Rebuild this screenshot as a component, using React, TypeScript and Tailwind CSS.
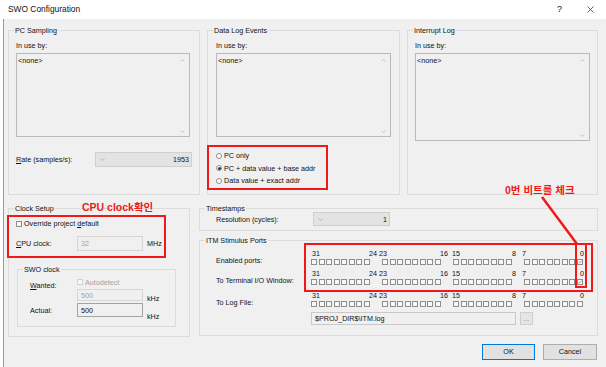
import React from "react";

type Props = { children?: React.ReactNode; className?: string };

// group box drawn the way the Win32 dialog does it: title sits on the top border
function Group({ title, className = "", children }: Props & { title: string }) {
  return (
    <fieldset className={`border border-[#dcdcdc] min-w-0 ${className}`}>
      <legend className="ml-[5px] px-[1px] leading-[9px]">{title}</legend>
      {children}
    </fieldset>
  );
}

function Chevron({ up = false, color = "#b8b8b8" }: { up?: boolean; color?: string }) {
  return (
    <svg width="5" height="3" viewBox="0 0 5 3" className="block">
      <polyline
        points={up ? "0.5,2.5 2.5,0.5 4.5,2.5" : "0.5,0.5 2.5,2.5 4.5,0.5"}
        fill="none"
        stroke={color}
        strokeWidth="0.8"
      />
    </svg>
  );
}

function ListBox({ className = "" }: Props) {
  return (
    <div className={`flex border border-[#b9b9b9] bg-[#f0f0f0] ${className}`}>
      <div className="flex-1 pl-[1px] pt-[2px] leading-[9px]">&lt;none&gt;</div>
      <div className="w-[13px] flex flex-col items-center justify-between pt-[5px] pb-[3px]">
        <Chevron up />
        <Chevron />
      </div>
    </div>
  );
}

function Combo({ value, className = "" }: { value: string; className?: string }) {
  return (
    <div className={`flex items-center justify-between border border-[#cfcfcf] bg-[#e3e3e3] pl-[4px] pr-[2px] ${className}`}>
      <Chevron color="#a8a8a8" />
      <span className="leading-[9px]">{value}</span>
    </div>
  );
}

function Box({ checked = false, disabled = false }: { checked?: boolean; disabled?: boolean }) {
  return (
    <span
      className={`flex items-center justify-center w-[6px] h-[6px] border ${
        disabled ? "border-[#d2d2d2]" : "border-[#8e8e8e]"
      } bg-[#f7f7f7]`}
    >
      {checked && (
        <svg width="4" height="4" viewBox="0 0 4 4" className="block">
          <polyline points="0.4,2 1.5,3.2 3.6,0.6" fill="none" stroke="#8a8a8a" strokeWidth="0.7" />
        </svg>
      )}
    </span>
  );
}

function Radio({ label, checked = false }: { label: string; checked?: boolean }) {
  return (
    <div className="flex items-center h-[9px] leading-[9px]">
      <span className="flex items-center justify-center w-[6px] h-[6px] rounded-full border border-[#8e8e8e] bg-white">
        {checked && <span className="w-[3px] h-[3px] rounded-full bg-[#333]" />}
      </span>
      <span className="ml-[2px]">{label}</span>
    </div>
  );
}

function Field({ value, className = "", dim = false }: { value: string; className?: string; dim?: boolean }) {
  return (
    <div
      className={`flex items-center pl-[3px] border bg-[#f0f0f0] leading-[9px] ${
        dim ? "border-[#d6d6d6] text-[#a3a3a3]" : "border-[#a4a4a4]"
      } ${className}`}
    >
      {value}
    </div>
  );
}

// bit numbers above the check boxes, with the widths that put each one where the dialog has it
const LABELS: [string, string][] = [
  ["31", "w-[57px]"],
  ["24", "w-[10px]"],
  ["23", "w-[61px]"],
  ["16", "w-[12px]"],
  ["15", "w-[60px]"],
  ["8", "w-[10px]"],
  ["7", "w-[58px]"],
  ["0", "w-[6px]"],
];

function BitRow({ checkedZero = false }: { checkedZero?: boolean }) {
  return (
    <div className="flex flex-col">
      <div className="flex h-[7px] leading-[7px] pl-[1px]">
        {LABELS.map(([n, w]) => (
          <span key={n} className={w}>
            {n}
          </span>
        ))}
      </div>
      <div className="flex gap-[12px] mt-[2px]">
        {[0, 1, 2, 3].map((g) => (
          <div key={g} className="w-[59px] flex justify-between">
            {Array.from({ length: 8 }).map((_, i) => (
              <Box key={i} checked={checkedZero && g === 3 && i === 7} />
            ))}
          </div>
        ))}
      </div>
    </div>
  );
}

function Button({ label, focused = false }: { label: string; focused?: boolean }) {
  return (
    <div
      className={`flex items-center justify-center h-[16px] bg-[#e1e1e1] border ${
        focused ? "w-[53px] border-[#0078d7]" : "w-[54px] border-[#adadad]"
      }`}
    >
      {label}
    </div>
  );
}

export default function App() {
  return (
    <div className="relative w-[606px] h-[367px] overflow-hidden bg-white text-[#111] text-[7.2px] font-['Liberation_Sans',Arial,sans-serif]">
      {/* title bar */}
      <div className="flex items-center h-[19px] pl-[8px] text-[8.4px]">
        <span className="flex-1">SWO Configuration</span>
        <span className="w-[30px] text-[9px]">?</span>
        <svg width="7" height="7" viewBox="0 0 7 7" className="mr-[12px] block">
          <path d="M0.5 0.5 L6.5 6.5 M6.5 0.5 L0.5 6.5" stroke="#222" strokeWidth="0.7" />
        </svg>
      </div>

      <div className="ml-[3px] h-[348px] border-l border-[#9b9b9b] bg-[#f0f0f0] pl-[4px] pt-[7px]">
        {/* top row */}
        <div className="flex gap-[7px]">
          <Group title="PC Sampling" className="w-[192px] h-[169px]">
            <div className="pl-[7px]">
              <div className="pt-[6px] leading-[9px]">In use by:</div>
              <ListBox className="mt-[3px] w-[174px] h-[84px]" />
              <div className="mt-[15px] flex items-center">
                <span className="w-[79px] leading-[9px]">
                  <u>R</u>ate (samples/s):
                </span>
                <Combo value="1953" className="w-[97px] h-[15px]" />
              </div>
            </div>
          </Group>

          <Group title="Data Log Events" className="w-[193px] h-[169px]">
            <div className="pl-[8px]">
              <div className="pt-[6px] leading-[9px]">In use by:</div>
              <ListBox className="mt-[3px] w-[175px] h-[84px]" />
              <div className="mt-[14px] flex flex-col gap-[3.5px]">
                <Radio label="PC only" />
                <Radio label="PC + data value + base addr" checked />
                <Radio label="Data value + exact addr" />
              </div>
            </div>
          </Group>

          <Group title="Interrupt Log" className="w-[191px] h-[169px]">
            <div className="pl-[7px]">
              <div className="pt-[6px] leading-[9px]">In use by:</div>
              <ListBox className="mt-[3px] w-[175px] h-[88px]" />
            </div>
          </Group>
        </div>

        {/* bottom row */}
        <div className="mt-[9px] flex gap-[9px]">
          <Group title="Clock Setup" className="w-[182px] h-[133px]">
            <div className="pl-[7px]">
              <div className="pt-[6px] flex items-center h-[15px] leading-[9px]">
                <Box />
                <span className="ml-[2px]">
                  Override project <u>d</u>efault
                </span>
              </div>
              <div className="mt-[8px] flex items-center">
                <span className="w-[61px] leading-[9px]">
                  <u>C</u>PU clock:
                </span>
                <Field value="32" dim className="w-[66px] h-[15px]" />
                <span className="ml-[4px] leading-[9px]">MHz</span>
              </div>

              <Group title="SWO clock" className="mt-[14px] ml-[1px] w-[159px] h-[62px]">
                <div className="flex pl-[12px]">
                  <div className="w-[47px] flex flex-col leading-[9px]">
                    <span className="mt-[6.5px]">
                      <u>W</u>anted:
                    </span>
                    <span className="mt-[16px]">Actual:</span>
                  </div>
                  <div className="w-[66px] flex flex-col">
                    <div className="mt-[4px] h-[8px] flex items-center leading-[9px] text-[#a3a3a3]">
                      <Box disabled />
                      <span className="ml-[2px]">Autodetect</span>
                    </div>
                    <Field value="500" dim className="mt-[3px] h-[12px]" />
                    <Field value="500" className="mt-[2px] h-[14px]" />
                  </div>
                  <div className="ml-[4px] flex flex-col leading-[9px]">
                    <span className="mt-[19.5px]">kHz</span>
                    <span className="mt-[9px]">kHz</span>
                  </div>
                </div>
              </Group>
            </div>
          </Group>

          <div className="w-[399px] flex flex-col">
            <Group title="Timestamps" className="h-[27px]">
              <div className="flex items-center pl-[16px] -mt-[1px]">
                <span className="w-[97px] leading-[9px]">Resolution (cycles):</span>
                <Combo value="1" className="w-[77px] h-[14px]" />
              </div>
            </Group>

            <Group title="ITM Stimulus Ports" className="mt-[5px] h-[100px]">
              <div className="pl-[16px] pt-[5px]">
                <div className="flex items-end">
                  <span className="w-[95px] leading-[9px]">Enabled ports:</span>
                  <BitRow checkedZero />
                </div>
                <div className="mt-[5px] flex items-end">
                  <span className="w-[95px] leading-[9px]">To Terminal I/O Window:</span>
                  <BitRow checkedZero />
                </div>
                <div className="mt-[7px] flex items-end">
                  <span className="w-[95px] leading-[9px]">To Log File:</span>
                  <BitRow />
                </div>
                <div className="mt-[5px] ml-[95px] flex items-center">
                  <Field value="$PROJ_DIR$\ITM.log" className="w-[205px] h-[13px] border-[#c9c9c9]" />
                  <div className="ml-[4px] w-[13px] h-[13px] flex items-center justify-center border border-[#cfcfcf] bg-[#e5e5e5] text-[#8a8a8a] leading-[9px]">
                    ...
                  </div>
                </div>
              </div>
            </Group>
          </div>
        </div>

        {/* dialog buttons */}
        <div className="mt-[7px] pr-[9px] flex justify-end gap-[8px]">
          <Button label="OK" focused />
          <Button label="Cancel" />
        </div>
      </div>

      {/* red annotations drawn over the screenshot */}
      <div className="absolute inset-0 pointer-events-none font-['Liberation_Sans','Noto_Sans_CJK_KR',sans-serif]">
        <div className="absolute left-[207px] top-[145px] w-[121px] h-[45px] border-2 border-[#f01818]" />
        <div className="absolute left-[7px] top-[215px] w-[159px] h-[43px] border-2 border-[#f01818]" />
        <div className="absolute left-[304px] top-[243px] w-[289px] h-[49px] border-2 border-[#f01818]" />
        <div className="absolute left-[575px] top-[243px] w-[12px] h-[45px] border-2 border-[#f01818]" />
        <span className="absolute left-[82px] top-[201px] text-[10.5px] leading-[12px] font-bold text-[#f01818]">
          CPU clock확인
        </span>
        <span className="absolute left-[505px] top-[184px] text-[10.5px] leading-[12px] font-bold text-[#f01818]">
          0번 비트를 체크
        </span>
        <svg width="606" height="367" className="absolute inset-0">
          <line x1="542" y1="197" x2="577" y2="244" stroke="#f01818" strokeWidth="2.5" />
        </svg>
      </div>
    </div>
  );
}
